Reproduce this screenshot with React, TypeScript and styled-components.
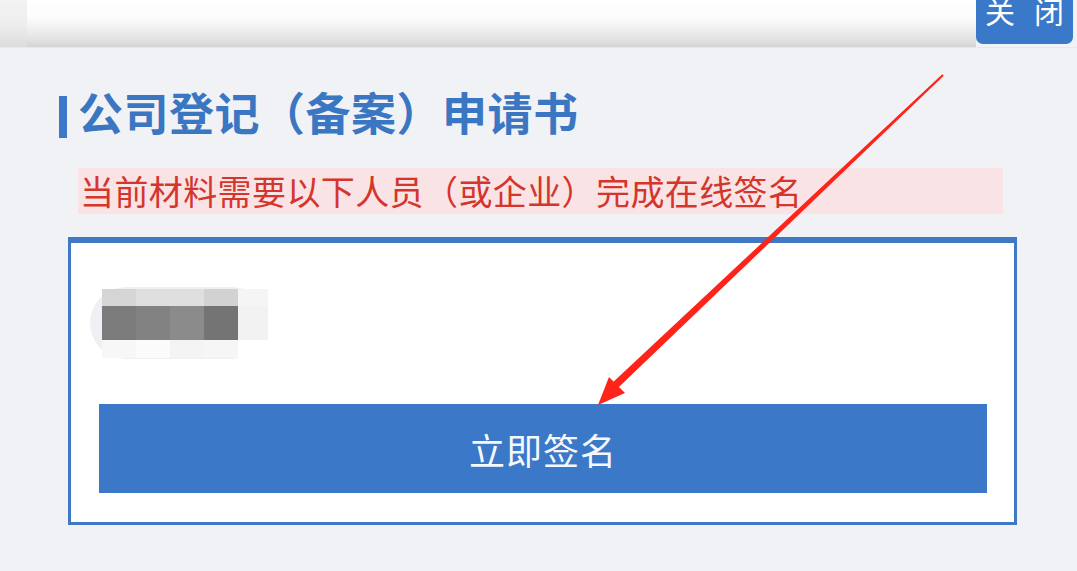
import React from "react";
import styled, { createGlobalStyle } from "styled-components";

const GlobalStyle = createGlobalStyle`
  html, body {
    margin: 0;
    padding: 0;
    background: #f0f2f6;
  }
  body {
    font-family: "Noto Sans CJK SC", "Noto Sans", sans-serif;
  }
`;

const Page = styled.div`
  position: relative;
  width: 1077px;
  height: 571px;
  overflow: hidden;
  background: #f0f2f6;
`;

const TopBar = styled.div`
  display: flex;
  height: 47px;
  border-bottom: 1px solid #e6e8ec;
`;

const BarEdge = styled.div`
  width: 27px;
  background: linear-gradient(180deg, #f3f3f3 0%, #eeeeee 50%, #dcdcdc 100%);
`;

const BarFill = styled.div`
  flex: 1;
  background: linear-gradient(180deg, #ffffff 0%, #fbfbfb 40%, #e2e2e2 85%, #d4d4d4 100%);
`;

const CloseButton = styled.div`
  width: 97px;
  height: 44px;
  margin-right: 4px;
  background: #3a78c9;
  border-radius: 0 0 7px 7px;
  color: #ffffff;
  font-size: 30px;
  display: flex;
  justify-content: flex-start;
  align-items: flex-end;
  overflow: hidden;
  white-space: nowrap;
  letter-spacing: 19px;
  padding-left: 9px;
  box-sizing: border-box;
  line-height: 1;
  padding-bottom: 19px;
`;

const Content = styled.div`
  display: flex;
  flex-direction: column;
  padding-left: 59px;
`;

const TitleRow = styled.div`
  display: flex;
  align-items: center;
  margin-top: 45px;
  height: 44px;
`;

const TitleMark = styled.div`
  width: 8px;
  height: 42px;
  background: #3a78c9;
  margin-right: 11px;
  margin-top: 4px;
`;

const Title = styled.h1`
  margin: 0 0 8px 0;
  font-size: 45px;
  font-weight: 700;
  color: #3a76c2;
  line-height: 1;
  letter-spacing: 0.5px;
  white-space: nowrap;
`;

const Notice = styled.div`
  margin-top: 31px;
  margin-left: 19px;
  width: 925px;
  height: 46px;
  background: #f9e3e4;
  color: #d4352c;
  font-size: 34px;
  line-height: 46px;
  padding-left: 2px;
  letter-spacing: 0.4px;
  box-sizing: border-box;
  white-space: nowrap;
`;

const Card = styled.div`
  margin-top: 23px;
  margin-left: 9px;
  width: 949px;
  height: 288px;
  box-sizing: border-box;
  background: #ffffff;
  border: 3px solid #3f79c4;
  border-top-width: 6px;
  display: flex;
  flex-direction: column;
  padding: 44px 0 0 19px;
`;

const NameBlur = styled.div`
  width: 178px;
  height: 72px;
  border-radius: 36px;
  background: #eef0f3;
  display: flex;
  align-items: center;
  padding-left: 12px;
  box-sizing: border-box;
`;

const PixelGrid = styled.div`
  display: grid;
  grid-template-columns: repeat(4, 34px) 30px;
  grid-template-rows: 17px 34px 18px;
`;

const Pixel = styled.div<{ $c: string }>`
  background: ${(p) => p.$c};
`;

const SignButton = styled.button`
  margin-top: 45px;
  margin-left: 9px;
  width: 888px;
  height: 89px;
  border: none;
  background: #3b78c8;
  color: #f4f7fc;
  font-family: "Noto Sans CJK SC", sans-serif;
  font-size: 36px;
  letter-spacing: 1px;
  padding: 0;
  cursor: pointer;
`;

const ArrowLayer = styled.svg`
  position: absolute;
  left: 0;
  top: 0;
  pointer-events: none;
`;

const pixels = [
  "#d5d5d5", "#dfdfdf", "#dfdfdf", "#d2d2d2", "#f5f5f5",
  "#7b7b7b", "#828282", "#8b8b8b", "#747474", "#f2f2f2",
  "#f7f7f7", "#fbfbfb", "#f4f4f4", "#f6f6f6", "#ffffff",
];

const App = () => {
  return (
    <Page>
      <GlobalStyle />
      <TopBar>
        <BarEdge />
        <BarFill />
        <CloseButton>关闭</CloseButton>
      </TopBar>
      <Content>
        <TitleRow>
          <TitleMark />
          <Title>公司登记（备案）申请书</Title>
        </TitleRow>
        <Notice>当前材料需要以下人员（或企业）完成在线签名</Notice>
        <Card>
          <NameBlur>
            <PixelGrid>
              {pixels.map((c, i) => (
                <Pixel key={i} $c={c} />
              ))}
            </PixelGrid>
          </NameBlur>
          <SignButton>立即签名</SignButton>
        </Card>
      </Content>
      <ArrowLayer width="1077" height="571" viewBox="0 0 1077 571">
        {/* tapered shaft */}
        <polygon points="942.3,74.3 943.7,75.7 617.6,388.3 612.4,382.7" fill="#ff2419" />
        {/* head */}
        <polygon points="598,405 609,377 625,393" fill="#ff2419" />
      </ArrowLayer>
    </Page>
  );
};

export default App;
